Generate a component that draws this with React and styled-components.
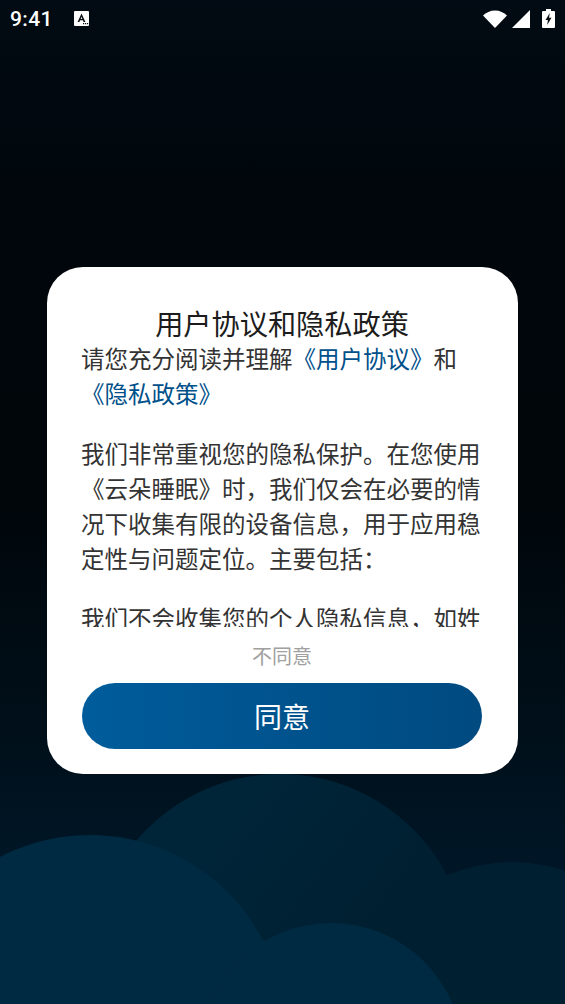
import styled, { createGlobalStyle } from "styled-components";

const GlobalStyle = createGlobalStyle`
  html, body {
    margin: 0;
    padding: 0;
    background: #000609;
  }
`;

const Screen = styled.div`
  position: relative;
  width: 565px;
  height: 1004px;
  overflow: hidden;
  display: flex;
  flex-direction: column;
  font-family: "Noto Sans CJK SC", "Noto Sans", sans-serif;
  background: linear-gradient(180deg, #020b13 0%, #00060b 20%, #00060a 50%, #00101b 74%, #00182a 90%, #001a2d 100%);
`;

const Clouds = styled.svg`
  position: absolute;
  left: 0;
  bottom: 0;
`;

const StatusBar = styled.div`
  position: relative;
  height: 37px;
  display: flex;
  align-items: center;
  padding: 0 10px 0 10px;
  color: #fff;
`;

const Clock = styled.span`
  font-family: Roboto, sans-serif;
  font-size: 21px;
  font-weight: 500;
  letter-spacing: 0.4px;
  width: 64px;
`;

const StatusIcons = styled.div`
  margin-left: auto;
  display: flex;
  align-items: center;
  gap: 5px;
`;

const Body = styled.div`
  position: relative;
  flex: 1;
  display: flex;
  align-items: center;
  justify-content: center;
`;

const Card = styled.div`
  width: 471px;
  height: 507px;
  box-sizing: border-box;
  padding: 38px 35px 25px 34px;
  background: #fff;
  border-radius: 36px;
  display: flex;
  flex-direction: column;
  align-items: center;
`;

const Title = styled.h1`
  margin: 0;
  font-size: 28.2px;
  font-weight: 400;
  line-height: 36px;
  color: #1c1c1c;
  text-align: center;
`;

const Scroller = styled.div`
  width: 402px;
  height: 286px;
  overflow: hidden;
  flex: none;
`;

const Paragraph = styled.p`
  margin: 0 0 25px;
  font-size: 23.5px;
  line-height: 35px;
  color: #333;
`;

const Link = styled.span`
  color: #00508a;
`;

const DeclineButton = styled.button`
  margin-top: 13px;
  height: 32px;
  padding: 0;
  border: none;
  background: none;
  font-family: inherit;
  font-size: 20px;
  line-height: 32px;
  color: #a0a0a0;
`;

const AcceptButton = styled.button`
  margin-top: 11px;
  width: 400px;
  height: 66px;
  flex: none;
  border: none;
  border-radius: 33px;
  background: linear-gradient(90deg, #005c9b 0%, #004a80 100%);
  color: #fff;
  font-family: inherit;
  font-size: 28px;
`;

function App() {
  return (
    <>
      <GlobalStyle />
      <Screen>
        <Clouds width="565" height="240" viewBox="0 764 565 240">
          <defs>
            <linearGradient id="backCloud" gradientUnits="userSpaceOnUse" x1="250" y1="800" x2="420" y2="930">
              <stop offset="0" stopColor="#002438" />
              <stop offset="1" stopColor="#001f30" />
            </linearGradient>
          </defs>
          <circle cx="512" cy="1027" r="165" fill="#001f30" />
          <circle cx="280" cy="962" r="188" fill="url(#backCloud)" />
          <circle cx="90" cy="1030" r="195" fill="#002a41" />
          <circle cx="331" cy="1055" r="132" fill="#002a41" />
        </Clouds>
        <StatusBar>
          <Clock>9:41</Clock>
          <svg width="16" height="15" viewBox="0 0 16 15">
            <path d="M1 0h13a1 1 0 0 1 1 1v13a1 1 0 0 1-1 1H1a1 1 0 0 1-1-1V1a1 1 0 0 1 1-1z" fill="#fff" />
            <path d="M7.5 2.5 3.6 11h1.8l.7-1.7h2.8l.7 1.7h1.8L7.5 2.5zM6.7 7.9l.8-2.2.8 2.2z" fill="#0a0f14" />
            <path d="M9 12h1.2v1.2H9zM11 12h1.2v1.2H11zM13 12h1.2v1.2H13z" fill="#0a0f14" />
          </svg>
          <StatusIcons>
            <svg width="24" height="18" viewBox="0 0 24 18">
              <path d="M0 5.5C3 2.5 7.2 0.5 12 0.5s9 2 12 5L12 18z" fill="#fff" />
            </svg>
            <svg width="18" height="18" viewBox="0 0 18 18">
              <path d="M18 0v18H0z" fill="#fff" />
            </svg>
            <svg width="13" height="19" viewBox="0 0 13 19" style={{ marginLeft: 7 }}>
              <path d="M4 0h5v2h3a1 1 0 0 1 1 1v15a1 1 0 0 1-1 1H1a1 1 0 0 1-1-1V3a1 1 0 0 1 1-1h3z" fill="#fff" />
              <path d="M7.8 4 3.5 11h2.4l-.7 5 4.3-7.2H7z" fill="#0a0f14" />
            </svg>
          </StatusIcons>
        </StatusBar>
        <Body>
          <Card>
            <Title>用户协议和隐私政策</Title>
            <Scroller>
              <Paragraph>
                请您充分阅读并理解<Link>《用户协议》</Link>和<Link>《隐私政策》</Link>
              </Paragraph>
              <Paragraph>
                我们非常重视您的隐私保护。在您使用《云朵睡眠》时，我们仅会在必要的情况下收集有限的设备信息，用于应用稳定性与问题定位。主要包括：
              </Paragraph>
              <Paragraph>我们不会收集您的个人隐私信息，如姓名、手机号码等。</Paragraph>
            </Scroller>
            <DeclineButton>不同意</DeclineButton>
            <AcceptButton>同意</AcceptButton>
          </Card>
        </Body>
      </Screen>
    </>
  );
}

export default App;
